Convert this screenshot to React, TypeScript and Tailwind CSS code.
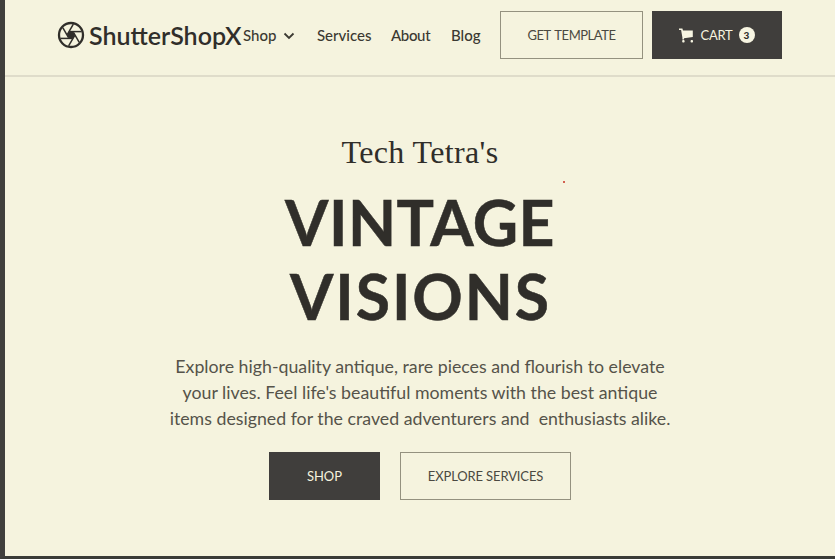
import type { ReactNode } from "react";

const blades = [0, 60, 120, 180, 240, 300];

function ShutterLogo() {
  return (
    <svg viewBox="-14 -14 28 28" className="size-7 shrink-0" fill="none" stroke="#302e2a">
      <circle r="12" strokeWidth="2.3" />
      {blades.map((a) => (
        <path key={a} d="M-1 -3.4 L10.6 -3.4" strokeWidth="1.5" transform={`rotate(${a})`} />
      ))}
      <path d="M-2 -3.7H2L4.2 0 2 3.7H-2L-4.2 0Z" fill="#302e2a" stroke="none" />
    </svg>
  );
}

function CartIcon() {
  return (
    <svg viewBox="0 0 15 15" className="h-[15px] w-[15px] shrink-0" fill="#f7f5e2">
      <path d="M0 .6H3.4L4 2.6H13.8V9L5 10.2V11.4H3.4V9.6L2.1 2.1H0Z" />
      <rect x="3.2" y="12.1" width="2.4" height="2.4" rx=".8" />
      <rect x="11.6" y="12.1" width="2.4" height="2.4" rx=".8" />
    </svg>
  );
}

function Button({ dark, className, children }: { dark?: boolean; className: string; children: ReactNode }) {
  const tone = dark
    ? "bg-[#403e3c] border-[#403e3c] text-[#f5f3df]"
    : "border-[#94917f] text-[#4b4941]";
  return (
    <button className={`flex h-12 shrink-0 items-center justify-center border text-[13px] leading-5 whitespace-nowrap ${tone} ${className}`}>
      {children}
    </button>
  );
}

export default function App() {
  return (
    <div className="flex h-[559px] w-[835px] flex-col overflow-hidden border-b-3 border-l-5 border-b-[#3a3b37] border-l-[#403f3c] bg-[#f5f3de] font-['Lato',sans-serif] text-[#302e2a]">
      <header className="flex h-[77px] shrink-0 items-start border-b-2 border-[#dfdcca] pt-[11px] pl-[52px] whitespace-nowrap">
        <div className="flex h-12 w-[186px] shrink-0 items-center gap-[4px]">
          <ShutterLogo />
          <span className="text-[25px] leading-8 font-semibold">ShutterShopX</span>
        </div>
        <nav className="flex h-12 w-[257px] shrink-0 items-center text-[15px] font-medium text-[#3b3932]">
          <a className="flex w-[74px] items-center gap-[7px]">
            Shop
            <svg viewBox="0 0 12 8" className="mt-0.5 h-2 w-3" fill="none" stroke="#3b3932" strokeWidth="1.8">
              <path d="M1.5 1.5 6 6 10.5 1.5" />
            </svg>
          </a>
          <a className="w-[74px]">Services</a>
          <a className="w-[60px] tracking-[-0.35px]">About</a>
          <a>Blog</a>
        </nav>
        <div className="flex gap-[9px]">
          <Button className="w-[143px] tracking-[-0.45px] [word-spacing:1.5px]">GET TEMPLATE</Button>
          <Button dark className="w-[130px]">
            <CartIcon />
            <span className="ml-[6px] tracking-[-0.25px]">CART</span>
            <span className="ml-[6px] flex size-4 items-center justify-center rounded-full bg-[#f7f5e2] text-[10px] leading-none font-black text-[#302e2a]">3</span>
          </Button>
        </div>
      </header>

      <main className="flex flex-col items-center pt-[54px] text-center">
        <p className="font-['Liberation_Serif',serif] text-[32px] leading-[42px] tracking-[0.37px]">Tech Tetra's</p>
        <h1 className="mt-[12px] text-[62.5px] leading-[74px] font-bold whitespace-nowrap [-webkit-text-stroke:0.5px_#302e2a]">
          <span className="block tracking-[0.5px]">VINTAGE</span>
          <span className="block pl-px tracking-[1.9px]">VISIONS</span>
        </h1>
        <p className="mt-[20px] text-[17.75px] leading-[26px] whitespace-pre text-[#55534a]">
          <span className="block">Explore high-quality antique, rare pieces and flourish to elevate</span>
          <span className="block">your lives. Feel life's beautiful moments with the best antique</span>
          <span className="block">items designed for the craved adventurers and  enthusiasts alike.</span>
        </p>
        <div className="mt-[21px] flex gap-5">
          <Button dark className="w-[111px]">SHOP</Button>
          <Button className="w-[171px] tracking-[-0.13px]">EXPLORE SERVICES</Button>
        </div>
      </main>
      <i className="absolute top-[181px] left-[563px] size-[2px] bg-[#d2604f]" />
    </div>
  );
}
